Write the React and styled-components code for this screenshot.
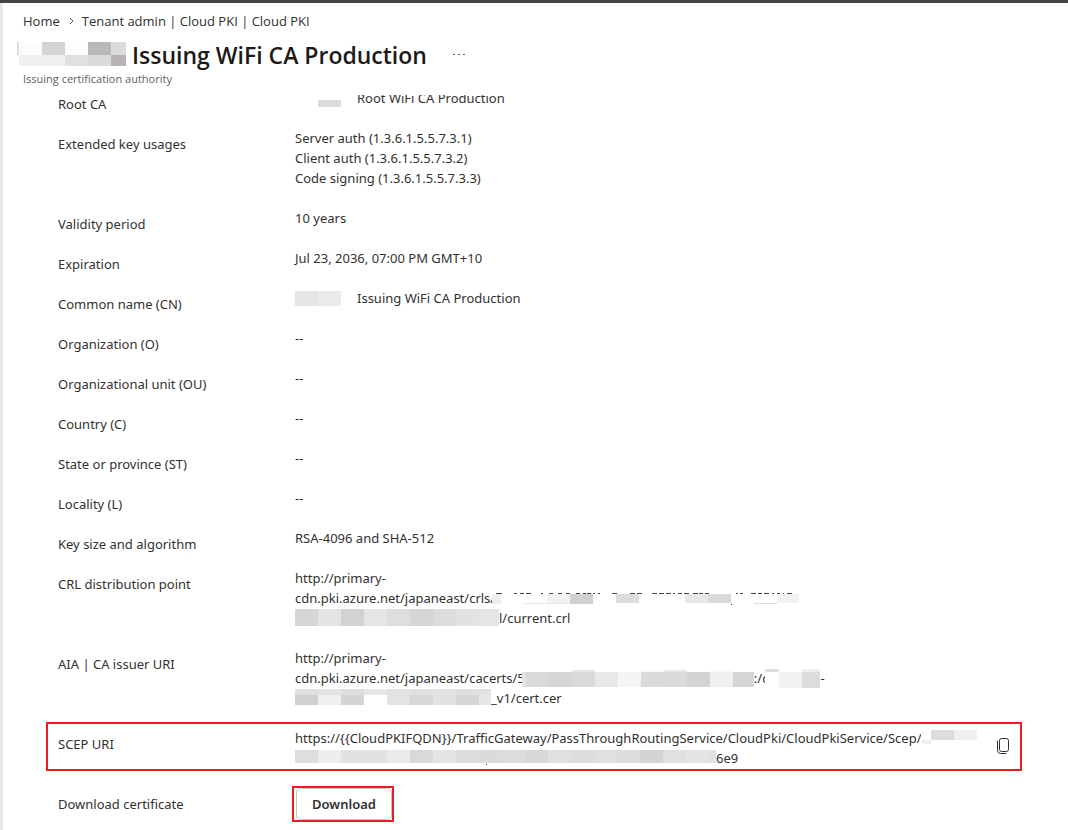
import React from 'react'
import styled, { createGlobalStyle } from 'styled-components';


const GlobalStyle = createGlobalStyle`
* {
  box-sizing: border-box;
}
body {
  margin: 0;
  background-color: #fff;
}
`

const Page = styled.div`
height: 100vh;
display: flex;
flex-direction: column;
overflow: hidden;
border-top: 3px solid #444;
background-color: #fff;
color: #323130;
font-family: "Noto Sans", "Open Sans", sans-serif;
font-size: 13px;
line-height: 20px;
`

const Body = styled.div`
flex: 1;
min-height: 0;
display: flex;
flex-direction: column;
border-left: 3px solid #e8e8e8;
`

const Header = styled.header`
padding: 8px 20px;
font-family: "Open Sans", "Noto Sans", sans-serif;
`

const Breadcrumb = styled.nav`
display: flex;
align-items: center;
gap: 8px;
`

const Crumb = styled.a`
color: #323130;
text-decoration: none;

&:hover {
  text-decoration: underline;
}
`

const TitleRow = styled.div`
display: flex;
align-items: center;
gap: 6px;
margin-left: -6px;
padding-top: 8px;
`

const Title = styled.h1`
margin: 0;
font-size: 23px;
line-height: 32px;
font-weight: 600;
color: #1b1a19;
white-space: nowrap;
`

const Subtitle = styled.div`
font-size: 11px;
line-height: 16px;
color: #605e5c;
`

const IconButton = styled.button`
display: flex;
align-items: center;
justify-content: center;
flex: none;
padding: 0;
border: none;
background: none;
color: #323130;
cursor: pointer;
`

const MoreButton = styled(IconButton)`
width: 24px;
height: 24px;
margin-left: 14px;
`

const Scroller = styled.main`
flex: 1;
min-height: 0;
overflow: hidden;
`

const Properties = styled.div`
display: flex;
flex-direction: column;
gap: 20px;
margin-top: -7px;
padding: 0 46px 0 43px;
`

const Row = styled.div`
display: flex;
padding: 0 12px;
${props => props.$marked && `
margin: -6px 0 -3px;
padding: 4px 8px 1px 10px;
border: 2px solid #ed1c24;
`}
`

const Label = styled.div`
flex: none;
width: 237px;
padding-top: 6px;
line-height: 20px;
height: 20px;
`

const Value = styled.div`
flex: 1;
min-width: 0;
`

const Line = styled.div`
display: flex;
height: 20px;
white-space: nowrap;
`

const Mosaic = styled.svg`
position: relative;
flex: none;
margin-right: ${props => props.$gap || 0}px;
margin-left: ${props => props.$tuck ? -3 : 0}px;
background-color: #fff;
`

const CopyButton = styled(IconButton)`
width: 18px;
height: 36px;
`

const ButtonFrame = styled.div`
display: inline-flex;
margin: -2px 0 0 -3px;
padding: 0 0 0 2px;
border: 2px solid #ed1c24;
`

const DownloadButton = styled.button`
width: 96px;
height: 32px;
padding: 0;
border: 1px solid #c8c6c4;
border-radius: 4px;
background-color: #fff;
color: #323130;
font-family: inherit;
font-size: 13px;
font-weight: 600;
cursor: pointer;
`

// blocks: [x, y, width, height, colour]
const Redacted = ({ width, height = 20, blocks, gap, tuck }) => (
  <Mosaic width={width} height={height} $gap={gap} $tuck={tuck} shapeRendering="crispEdges" aria-hidden="true">
    {blocks.map(([x, y, w, h, fill], i) => (
      <rect key={i} x={x} y={y} width={w} height={h} fill={fill} />
    ))}
  </Mosaic>
)

const strip = (colours, y, h, step = 23) =>
  colours.map((fill, i) => [i * step, y, step, h, fill])

const titleBlocks = [
  [0, 1, 2, 13, '#ddd'], [2, 1, 23, 13, '#fcfcfc'], [25, 1, 23, 13, '#d4d5d7'],
  [48, 1, 23, 13, '#fdfdfd'], [71, 1, 23, 13, '#b9b9b8'], [94, 1, 15, 13, '#dbdbdb'],
  [2, 14, 46, 11, '#f0f0f0'], [48, 14, 23, 11, '#e0e0e0'], [71, 14, 23, 11, '#dbdbdb'],
  [94, 14, 15, 11, '#b9b4b3'],
]

const rootBlocks = [[23, 12, 23, 7, '#dcdcdc'], [46, 4, 14, 8, '#fcfcfc']]

const nameBlocks = strip(['#e5e5e5', '#ebebeb'], 3, 15)

const glyphTops = [
  [4, 6], [22, 3], [28, 4], [34, 5], [49, 2], [57, 4], [66, 4], [74, 4],
  [84, 4], [91, 3], [95, 4], [101, 2], [106, 2], [120, 5], [138, 5], [145, 5],
  [160, 5], [167, 5], [174, 5], [181, 2], [186, 4], [192, 5], [201, 5], [207, 4],
  [213, 4], [244, 2], [248, 3], [259, 5], [266, 4], [272, 5], [280, 2], [285, 3],
  [291, 1], [295, 5],
].map(([x, w]) => [x, 5, w, 1, '#484746'])

const crlBlocks = [
  [0, 6, 9, 10, '#ededed'], [55, 6, 23, 9, '#f2f2f2'], [78, 6, 23, 10, '#d0d0d0'],
  [32, 15, 46, 1, '#e8e8e8'], [124, 6, 23, 9, '#dcdcdc'], [193, 6, 23, 9, '#e8e8e8'],
  [216, 6, 23, 9, '#dadada'], [262, 15, 23, 1, '#dedede'], [285, 6, 22, 9, '#f2f2f2'],
  [239, 16, 1, 1, '#323130'],
  ...glyphTops,
]

const crlEndBlocks = strip(['#d6d6d6', '#e4e4e4', '#d2d2d2', '#e5e5e5', '#dedede', '#d6d6d6', '#dcdcdc', '#e2e2e2', '#e6e6e6'], 1, 17)

const aiaBlocks = [
  [0, 4, 4, 15, '#e4e4e4'], [4, 4, 23, 15, '#dadada'], [27, 4, 23, 15, '#d6d6d6'],
  [50, 4, 23, 15, '#dadada'], [73, 4, 23, 15, '#e8e8e8'], [96, 4, 23, 15, '#f5f5f5'],
  [119, 4, 23, 15, '#dbdbdb'], [142, 4, 23, 15, '#dadada'], [165, 4, 23, 15, '#d4d4d4'],
  [188, 4, 23, 15, '#f0f0f0'], [211, 4, 21, 15, '#d6d6d6'],
  [50, 2, 23, 2, '#e5e5e5'], [119, 2, 23, 2, '#f8f8f8'], [142, 2, 23, 2, '#e8e8e8'],
  [188, 2, 23, 2, '#f8f8f8'],
]

const aiaTailBlocks = [
  [0, 1, 14, 3, '#dedede'], [14, 4, 23, 16, '#f2f2f2'], [37, 4, 18, 16, '#dcdcdc'],
  [37, 1, 18, 3, '#f0f0f0'],
]

const aiaEndBlocks = [
  ...strip(['#e0e0e0', '#e4e4e4', '#dedede', '#e6e6e6', '#e2e2e2', '#e0e0e0', '#e3e3e3', '#dfdfdf', '#e2e2e2'], 1, 6),
  ...strip(['#d0d0d0', '#efefef', '#d4d4d4', '#ffffff', '#e3e3e3', '#d8d8d8', '#e2e2e2', '#d6d6d6', '#e6e6e6'], 7, 10),
]

const scepBlocks = [
  [1, 12, 9, 4, '#eee'], [10, 2, 23, 10, '#dcdcdc'], [33, 2, 23, 10, '#f0f0f0'],
]

const scepEndBlocks = [
  ...strip(['#dedede', '#eeeeee', '#e2e2e2', '#e2e2e2', '#ebebeb', '#d9d9d9', '#e4e4e4', '#dddddd', '#dbdbdb', '#dddddd', '#d8d8d8', '#e0e0e0', '#dddddd', '#e0e0e0', '#dddddd', '#d4d4d4', '#e0e0e0', '#e4e4e4', '#e2e2e2'], 2, 13),
  [191, 16, 1, 1, '#323130'],
]

const Property = ({ label, marked, action, children }) => (
  <Row $marked={marked}>
    <Label>{label}</Label>
    <Value>
      {React.Children.map(children, child => <Line>{child}</Line>)}
    </Value>
    {action}
  </Row>
)

const Text = ({ children }) => <span>{children}</span>

const CopyIcon = () => (
  <svg width="14" height="18" viewBox="0 0 14 18" fill="none" stroke="currentColor">
    <rect x="3.5" y="1.5" width="9" height="13" rx="2" />
    <path d="M1.5 4v9.5a3 3 0 0 0 3 3H10" strokeLinecap="round" />
  </svg>
)

const App = () => {
  return (
    <Page>
      <GlobalStyle />
      <Body>
        <Header>
          <Breadcrumb aria-label="Breadcrumb">
            <Crumb href="#home">Home</Crumb>
            <svg width="6" height="8" viewBox="0 0 6 8" fill="none" stroke="#605e5c" aria-hidden="true">
              <path d="M2 1L5 4L2 7" />
            </svg>
            <Crumb href="#cloud-pki">Tenant admin | Cloud PKI | Cloud PKI</Crumb>
          </Breadcrumb>
          <TitleRow>
            <Redacted width={109} height={28} blocks={titleBlocks} />
            <Title>Issuing WiFi CA Production</Title>
            <MoreButton aria-label="More">
              <svg width="12" height="2" viewBox="0 0 12 2" fill="#605e5c">
                <rect x="0" width="2" height="1" />
                <rect x="5" width="2" height="1" />
                <rect x="10" width="2" height="1" />
              </svg>
            </MoreButton>
          </TitleRow>
          <Subtitle>Issuing certification authority</Subtitle>
        </Header>
        <Scroller>
          <Properties>
            <Property label="Root CA">
              <>
                <Redacted width={46} gap={16} blocks={rootBlocks} />
                <Text>Root WiFi CA Production</Text>
              </>
            </Property>
            <Property label="Extended key usages">
              <Text>Server auth (1.3.6.1.5.5.7.3.1)</Text>
              <Text>Client auth (1.3.6.1.5.5.7.3.2)</Text>
              <Text>Code signing (1.3.6.1.5.5.7.3.3)</Text>
            </Property>
            <Property label="Validity period">10 years</Property>
            <Property label="Expiration">Jul 23, 2036, 07:00 PM GMT+10</Property>
            <Property label="Common name (CN)">
              <>
                <Redacted width={46} gap={16} blocks={nameBlocks} />
                <Text>Issuing WiFi CA Production</Text>
              </>
            </Property>
            <Property label="Organization (O)">--</Property>
            <Property label="Organizational unit (OU)">--</Property>
            <Property label="Country (C)">--</Property>
            <Property label="State or province (ST)">--</Property>
            <Property label="Locality (L)">--</Property>
            <Property label="Key size and algorithm">RSA-4096 and SHA-512</Property>
            <Property label="CRL distribution point">
              <Text>http://primary-</Text>
              <>
                <Text>cdn.pki.azure.net/japaneast/crls/</Text>
                <Redacted width={307} blocks={crlBlocks} tuck />
              </>
              <>
                <Redacted width={204} blocks={crlEndBlocks} />
                <Text>l/current.crl</Text>
              </>
            </Property>
            <Property label="AIA | CA issuer URI">
              <Text>http://primary-</Text>
              <>
                <Text>cdn.pki.azure.net/japaneast/cacerts/5</Text>
                <Redacted width={232} blocks={aiaBlocks} tuck />
                <Text>:/c</Text>
                <Redacted width={55} blocks={aiaTailBlocks} tuck />
                <Text>-</Text>
              </>
              <>
                <Redacted width={196} blocks={aiaEndBlocks} />
                <Text>_v1/cert.cer</Text>
              </>
            </Property>
            <Property
              label="SCEP URI"
              marked
              action={<CopyButton aria-label="Copy SCEP URI"><CopyIcon /></CopyButton>}
            >
              <>
                <Text>{'https://{{CloudPKIFQDN}}/TrafficGateway/PassThroughRoutingService/CloudPki/CloudPkiService/Scep/'}</Text>
                <Redacted width={56} blocks={scepBlocks} />
              </>
              <>
                <Redacted width={421} blocks={scepEndBlocks} />
                <Text>6e9</Text>
              </>
            </Property>
            <Row>
              <Label>Download certificate</Label>
              <ButtonFrame>
                <DownloadButton>Download</DownloadButton>
              </ButtonFrame>
            </Row>
          </Properties>
        </Scroller>
      </Body>
    </Page>
  )
}

export default App;
